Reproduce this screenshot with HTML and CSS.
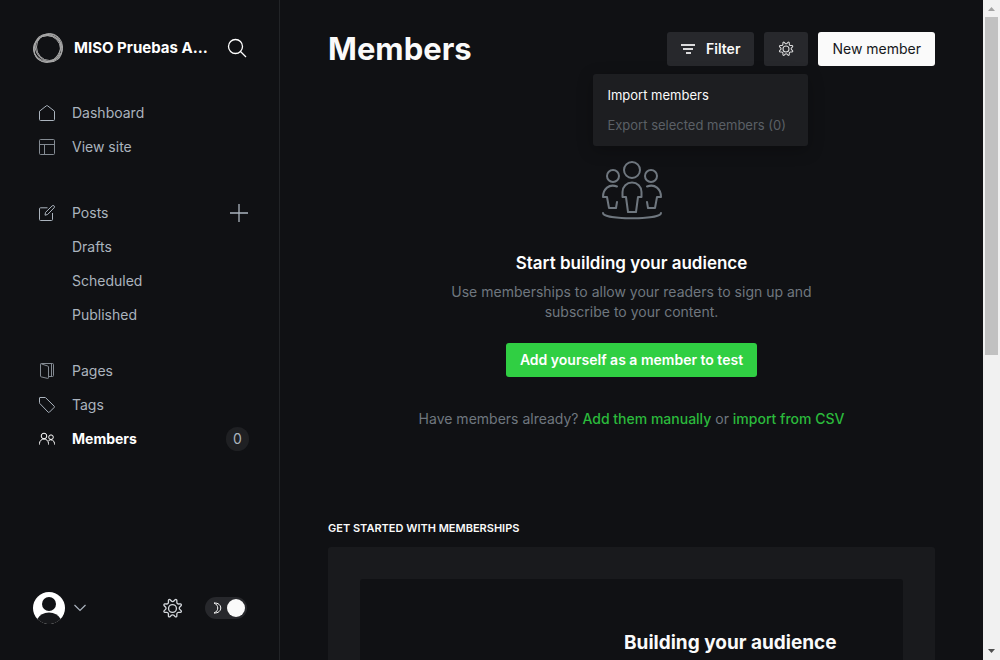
FILE: index.html
```html
<!DOCTYPE html>
<html lang="en">
<head>
<meta charset="utf-8">
<meta name="viewport" content="width=device-width, initial-scale=1">
<title>Members</title>
<link rel="stylesheet" href="styles.css">
</head>
<body>
<svg class="defs" aria-hidden="true">
  <symbol id="gear" viewBox="0 0 24 24">
    <path transform="rotate(22.5 12 12)" stroke-linejoin="round" d="M10.160 3.510l.77-1.900a1.150 1.150 0 0 1 2.140 0l.77 1.900a1.960 1.960 0 0 0 2.580 1.070l1.880-.8a1.150 1.150 0 0 1 1.510 1.520l-.8 1.880a1.960 1.960 0 0 0 1.080 2.580l1.900.77a1.150 1.150 0 0 1 0 2.140l-1.900.77a1.960 1.960 0 0 0-1.080 2.580l.8 1.880a1.150 1.150 0 0 1-1.510 1.510l-1.880-.8a1.960 1.960 0 0 0-2.580 1.080l-.77 1.900a1.150 1.150 0 0 1-2.140 0l-.77-1.900a1.960 1.960 0 0 0-2.580-1.080l-1.880.8a1.150 1.150 0 0 1-1.510-1.510l.8-1.880a1.960 1.960 0 0 0-1.080-2.580l-1.900-.77a1.150 1.150 0 0 1 0-2.140l1.900-.77a1.960 1.960 0 0 0 1.080-2.580l-.8-1.880a1.150 1.150 0 0 1 1.510-1.520l1.880.8a1.960 1.960 0 0 0 2.580-1.070z"/>
    <circle cx="12" cy="12" r="4.500"/>
  </symbol>
</svg>
<div class="app">
  <nav class="sidebar" aria-label="Main">
    <header class="site">
      <svg class="site-logo" viewBox="0 0 32 32" aria-hidden="true">
        <circle cx="15" cy="17" r="13.500"/>
        <ellipse cx="17.500" cy="15" rx="13" ry="13.500"/>
        <ellipse cx="15.500" cy="16" rx="12.500" ry="14.500" transform="rotate(35 15.500 16)"/>
        <ellipse cx="16.500" cy="16" rx="12.500" ry="14.500" transform="rotate(-40 16.500 16)"/>
        <ellipse cx="16" cy="16.500" rx="14.500" ry="13"/>
      </svg>
      <span class="site-name">MISO Pruebas Automatizadas</span>
      <button class="icon-button search" type="button" aria-label="Search">
        <svg class="icon-search" viewBox="0 0 20 20"><circle cx="8.500" cy="8.500" r="7"/><path d="M13.500 13.500l5.500 5.500"/></svg>
      </button>
    </header>
    <ul class="menu">
      <li><a href="#"><svg viewBox="0 0 16 16"><path d="M.5 6.200v8.300a1 1 0 0 0 1 1h13a1 1 0 0 0 1-1V6.200L8.600.8a1 1 0 0 0-1.200 0z"/></svg>Dashboard</a></li>
      <li><a href="#"><svg class="faint" viewBox="0 0 16 16"><rect x=".5" y=".5" width="15" height="15" rx="1"/><path d="M.5 5.500h15M5.500 5.500v10"/></svg>View site</a></li>
    </ul>
    <ul class="menu posts">
      <li class="row"><a href="#"><svg viewBox="0 0 16 16"><path d="M8.500 2.800h-7a1 1 0 0 0-1 1v10.700a1 1 0 0 0 1 1h11a1 1 0 0 0 1-1V8M6 10.200l.5-2.800L13.200.9a1.300 1.300 0 0 1 1.900 1.900L8.600 9.500z"/></svg>Posts</a>
        <button class="icon-button" type="button" aria-label="New post"><svg class="icon-plus" viewBox="0 0 20 20"><path d="M10 1v18M1 10h18"/></svg></button></li>
      <li><a class="sub" href="#">Drafts</a></li>
      <li><a class="sub" href="#">Scheduled</a></li>
      <li><a class="sub" href="#">Published</a></li>
    </ul>
    <ul class="menu content">
      <li><a href="#"><svg class="faint" viewBox="0 0 16 16"><path d="M1.500 1.200v11.800q0 .7.700.9l6.500 1.500q.8.100.8-.7V4q0-.8-.8-1L2.300.9M1.500 1.200Q1.500.5 2.300.5h11.200q1 0 1 1v11q0 1-1 1h-4M12.500.5v13"/></svg>Pages</a></li>
      <li><a href="#"><svg viewBox="0 0 16 16"><path d="M.5.900v4.800q0 .5.300.8l8.400 8.700q.6.600 1.200 0l4.800-4.800q.6-.6 0-1.200L6.700.8Q6.400.5 6 .5H1Q.5.500.5.900z"/></svg>Tags</a></li>
      <li class="row"><a class="active" href="#" aria-current="page"><svg viewBox="0 0 16 16"><circle cx="5" cy="5" r="2.800"/><circle cx="12" cy="6.200" r="2.300"/><path d="M.5 13.500v-1a4.500 4.500 0 0 1 9 0v1M9.500 9.600a3.700 3.700 0 0 1 6 2.900v1"/></svg>Members</a>
        <span class="count">0</span></li>
    </ul>
    <footer class="account">
      <button class="icon-button user" type="button" aria-label="Account">
        <svg class="avatar" viewBox="0 0 32 32"><circle class="disc" cx="16" cy="16" r="16"/><circle class="head" cx="16" cy="12" r="7"/><path class="body" d="M4.300 27Q8 20.500 16 20.500T27.700 27A16 16 0 0 1 4.300 27z"/></svg>
        <svg class="icon-chevron" viewBox="0 0 12 8"><path d="M.5 1L6 6.500 11.500 1"/></svg>
      </button>
      <a class="settings" href="#" aria-label="Settings"><svg class="icon-settings"><use href="#gear"/></svg></a>
      <label class="switch">
        <input type="checkbox" checked aria-label="Night mode">
        <svg class="icon-moon" viewBox="0 0 10 12" aria-hidden="true"><path d="M1 1C10 .5 10 11.500 1 11 6 9 6 3 1 1z"/></svg>
      </label>
    </footer>
  </nav>
  <main class="main">
    <header class="toolbar">
      <h1>Members</h1>
      <div class="actions">
        <button class="button filter" type="button"><svg class="icon-filter" viewBox="0 0 14 10"><path d="M0 1h14M2 5h10M5 9h5"/></svg>Filter</button>
        <div class="dropdown">
          <button class="button gear-button" type="button" aria-label="Member actions" aria-expanded="true"><svg class="icon-gear"><use href="#gear"/></svg></button>
          <div class="dropdown-menu">
            <button type="button">Import members</button>
            <button type="button" disabled>Export selected members (0)</button>
          </div>
        </div>
        <button class="button primary" type="button">New member</button>
      </div>
    </header>
    <section class="empty">
      <svg class="icon-members" viewBox="0 0 60 60" aria-hidden="true">
        <circle cx="30" cy="9" r="8"/><circle cx="11" cy="15" r="6"/><circle cx="49" cy="15" r="6"/>
        <path d="M26 51l-2-15h-3.500v-5a9.500 9.500 0 0 1 19 0v5H36l-2 15zM15 25.500C7 22.500 1 28 1 36h4l2 11h7l1-6M45 25.500c8-3 14 2.500 14 10.500h-4l-2 11h-7l-1-6M1 52c0 7 58 7 58 0"/>
      </svg>
      <h2>Start building your audience</h2>
      <p class="lead">Use memberships to allow your readers to sign up and subscribe to your content.</p>
      <button class="button green" type="button">Add yourself as a member to test</button>
      <p class="hint">Have members already? <a href="#">Add them manually</a> or <a href="#">import from CSV</a></p>
    </section>
    <section class="started">
      <h3>Get started with memberships</h3>
      <div class="panel"><article class="card"><div class="thumb"></div><div class="card-text"><h4>Building your audience with subscriber signups</h4></div></article></div>
    </section>
  </main>
  <div class="scrollbar" aria-hidden="true">
    <svg class="arrow-off" viewBox="0 0 17 17"><path d="M5 11h7L8.500 7z"/></svg>
    <div class="thumb-track"><div class="scroll-thumb"></div></div>
    <svg viewBox="0 0 17 17"><path d="M5 6h7l-3.500 4z"/></svg>
  </div>
</div>
</body>
</html>
```
FILE: styles.css
```css
* { box-sizing: border-box; }
body { margin: 0; background: #101114; color: #fafafa; font: 14px/20px Inter, "Liberation Sans", sans-serif; overflow: hidden; }
h1, h2, h3, h4, p, ul { margin: 0; padding: 0; }
ul { list-style: none; }
a { text-decoration: none; color: inherit; }
button { font: inherit; color: inherit; border: 0; background: none; padding: 0; }
svg { fill: none; stroke: currentColor; flex: none; display: block; }
.defs { display: none; }
.app { display: flex; height: 100vh; overflow: hidden; }

.sidebar { width: 280px; flex: none; display: flex; flex-direction: column; padding: 32px 30px 0 32px; border-right: 1px solid #222427; color: #abb4be; }
.site { display: flex; align-items: center; height: 32px; padding-right: 2px; }
.site-logo { width: 32px; height: 32px; stroke: #a8a8a8; stroke-width: 1; }
.site-name { width: 136px; margin-left: 10px; overflow: hidden; white-space: nowrap; text-overflow: ellipsis; color: #fff; font-size: 15px; font-weight: 700; }
.icon-button { display: flex; align-items: center; }
.search { margin-left: auto; color: #fff; }
.icon-search { width: 20px; height: 20px; stroke-width: 1.3; }
.menu { margin-top: 32px; }
.content { margin-top: 22px; }
.menu a { display: flex; align-items: center; height: 34px; padding-left: 7px; gap: 17px; }
.menu a svg { width: 16px; height: 16px; }
.menu .faint { opacity: .75; }
.menu .sub { padding-left: 40px; }
.menu .active { color: #fff; font-weight: 700; }
.row { display: flex; align-items: center; justify-content: space-between; }
.icon-plus { width: 20px; height: 20px; stroke-width: 1.3; }
.count { display: grid; place-items: center; min-width: 23px; height: 24px; border-radius: 12px; background: #1f2023; }
.account { display: flex; align-items: center; margin-top: auto; padding: 0 2px 36px 1px; }
.user { gap: 9px; }
.avatar { width: 32px; height: 32px; stroke: none; }
.disc { fill: #fff; }
.head { fill: #101114; }
.body { fill: #17181b; }
.icon-chevron { width: 12px; height: 8px; stroke-width: 1.2; }
.settings { margin-left: auto; color: #d5d9de; }
.icon-settings { width: 21px; height: 21px; stroke-width: 1.5; }
.switch { display: flex; align-items: center; width: 42px; height: 22px; margin-left: 22px; padding: 0 8px; border-radius: 11px; background: #27282c; position: relative; color: #fafafa; }
.switch input { appearance: none; position: absolute; top: 2px; right: 2px; width: 18px; height: 18px; margin: 0; border-radius: 50%; background: #fafafa; }
.icon-moon { width: 10px; height: 12px; }

.main { flex: 1; min-width: 0; padding: 32px 48px 0; }
.toolbar { display: flex; align-items: center; justify-content: space-between; }
h1 { font-size: 31px; line-height: 36px; font-weight: 700; }
.toolbar { height: 34px; }
.actions { display: flex; gap: 10px; }
.button { display: flex; align-items: center; height: 34px; padding: 0 14px; border-radius: 3px; background: #27282c; white-space: nowrap; }
.filter { gap: 11px; font-weight: 600; }
.icon-filter { width: 14px; height: 10px; stroke-width: 2; opacity: .85; }
.dropdown { position: relative; }
.icon-gear { width: 16px; height: 16px; stroke-width: 1.6; opacity: .85; }
.dropdown-menu { position: absolute; top: 42px; right: 0; width: 215px; padding: 6px 0; border-radius: 3px; background: #1d1e21; box-shadow: 0 4px 16px #0004; }
.dropdown-menu button { display: block; width: 100%; height: 30px; padding: 0 14px; text-align: left; font-size: 13px; }
.dropdown-menu button:disabled { color: #5b6066; }
.primary { background: #fafafa; color: #15171a; }
.empty { display: flex; flex-direction: column; align-items: center; padding-top: 95px; text-align: center; color: #6f777f; }
.icon-members { width: 60px; height: 60px; stroke-width: 2; stroke-linecap: round; stroke-linejoin: round; }
h2 { margin-top: 31px; color: #fff; font-size: 17px; line-height: 22px; font-weight: 600; }
.lead { max-width: 400px; margin-top: 8px; }
.green { margin-top: 21px; background: #30cf43; color: #fff; font-weight: 600; }
.hint { margin-top: 32px; }
.hint a { color: #2bba3c; font-weight: 500; }
.started { margin-top: 90px; }
h3 { font-size: 11px; line-height: 18px; font-weight: 600; text-transform: uppercase; }
.panel { margin-top: 10px; padding: 32px; border-radius: 3px; background: #191a1d; }
.card { display: grid; grid-template-columns: 232px 1fr; min-height: 260px; border-radius: 3px; background: #101114; }
.card-text { padding: 50px 32px; }
h4 { font-size: 19px; line-height: 27px; font-weight: 700; }

.scrollbar { display: flex; flex-direction: column; width: 17px; flex: none; background: #f1f1f1; }
.scrollbar svg { width: 17px; height: 17px; fill: #505050; stroke: none; }
.scrollbar .arrow-off { fill: #a3a3a3; }
.thumb-track { flex: 1; padding: 0 2px; }
.scroll-thumb { height: 54%; background: #c1c1c1; }
```
